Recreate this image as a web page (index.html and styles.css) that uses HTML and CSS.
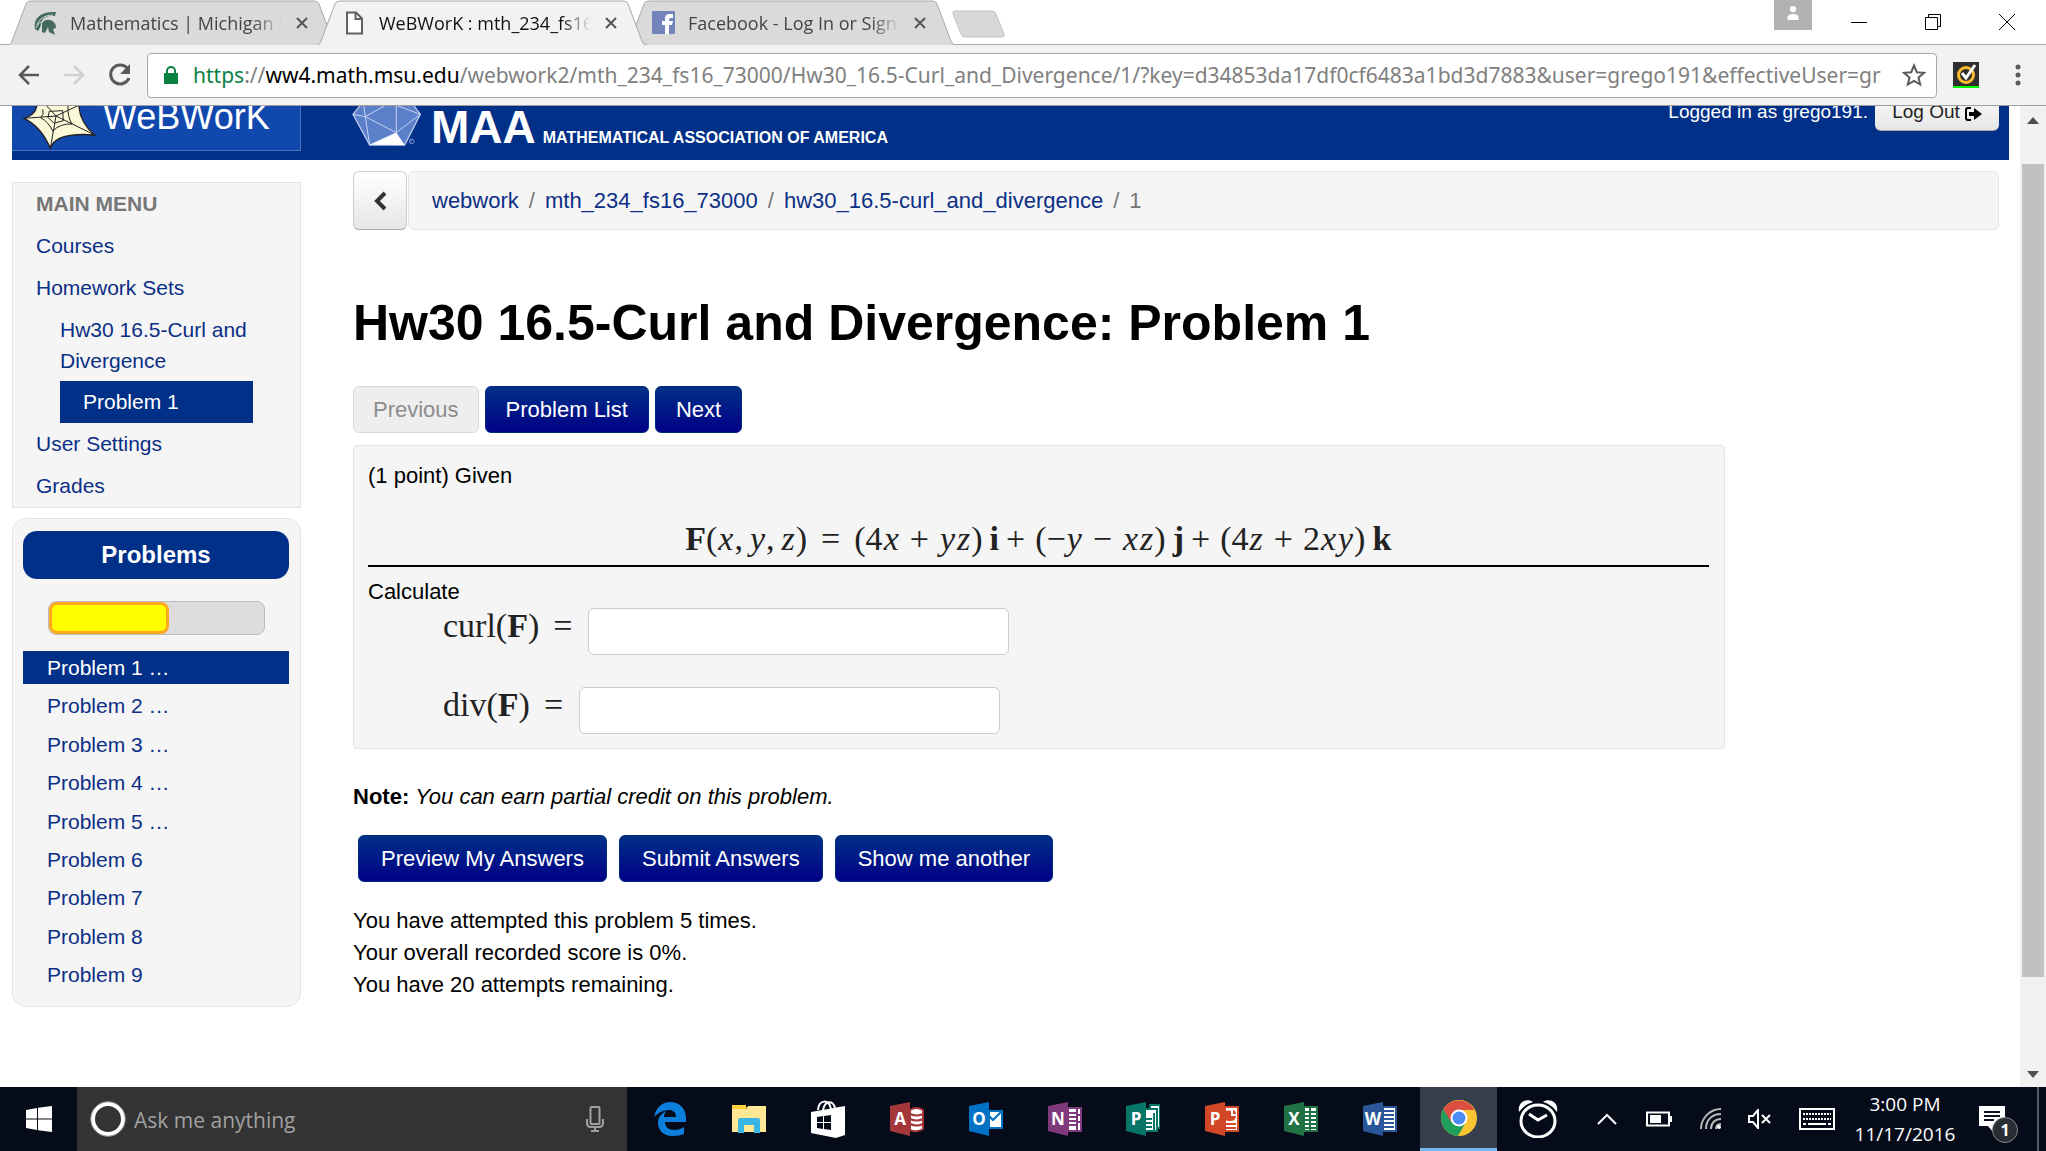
FILE: index.html
```html
<!DOCTYPE html>
<html lang="en">
<head>
<meta charset="utf-8">
<title>WeBWorK : mth_234_fs16_73000 : Hw30_16.5-Curl_and_Divergence : 1</title>
<link rel="stylesheet" href="styles.css">
</head>
<body>
<header class="tabstrip">
  <div class="tabs">
    <div class="tab">
      <svg class="tab-shape" viewBox="0 0 330 45"><path d="M0 45 C3 45 3 43 4 41 L18 4 Q19 1 23 1 H306 Q310 1 311 4 L325 41 Q326 45 330 45"/></svg>
      <svg class="favicon" viewBox="0 0 24 24"><path fill="#456a60" d="M1 18C-1 8 6 0 22 1l-1 4C14 4 8 7 7 12c0 3-1 5-3 8z"/><path fill="#456a60" d="M8 12c2-3 5-4 8-3 4 1 6 4 6 8l-3 1 2 6-6-3-1-5-3 6-3-1z"/><path d="M3 14c2-6 8-10 16-10M2 17c1-3 3-5 5-6" stroke="#dadada" fill="none"/></svg>
      <span class="tab-title">Mathematics | Michigan State</span>
      <button class="tab-close" aria-label="Close tab"><svg viewBox="0 0 12 12"><path d="M1 1 11 11M11 1 1 11"/></svg></button>
    </div>
    <div class="tab active">
      <svg class="tab-shape" viewBox="0 0 330 45"><path d="M0 45 C3 45 3 43 4 41 L18 4 Q19 1 23 1 H306 Q310 1 311 4 L325 41 Q326 45 330 45"/></svg>
      <svg class="favicon" viewBox="0 0 24 24"><path fill="#fff" stroke="#616161" stroke-width="2" d="M4 1.500h9l6 6V22.500H4zM12.500 2v6H19"/></svg>
      <span class="tab-title">WeBWorK : mth_234_fs16_73000</span>
      <button class="tab-close" aria-label="Close tab"><svg viewBox="0 0 12 12"><path d="M1 1 11 11M11 1 1 11"/></svg></button>
    </div>
    <div class="tab">
      <svg class="tab-shape" viewBox="0 0 330 45"><path d="M0 45 C3 45 3 43 4 41 L18 4 Q19 1 23 1 H306 Q310 1 311 4 L325 41 Q326 45 330 45"/></svg>
      <svg class="favicon" viewBox="0 0 24 24"><rect x="0" y="0" width="23" height="23" rx="1" fill="#7384bc"/><path fill="#fff" d="M13 23v-9h-3v-4h3V8c0-4 2-5 5-5h3v4h-2c-2 0-2 1-2 2v1h4l-1 4h-3v9z"/></svg>
      <span class="tab-title">Facebook - Log In or Sign Up</span>
      <button class="tab-close" aria-label="Close tab"><svg viewBox="0 0 12 12"><path d="M1 1 11 11M11 1 1 11"/></svg></button>
    </div>
    <button class="new-tab" aria-label="New tab"><svg viewBox="0 0 56 28"><path d="M4 1H41Q44 1 45 4L53 24Q54 27 51 27H14Q11 27 10 24L2 4Q1 1 4 1Z" fill="#d8d8d8" stroke="#c4c4c4"/></svg></button>
  </div>
  <div class="window-buttons">
    <button class="profile" aria-label="Profile"><svg width="14" height="14" viewBox="0 0 14 18"><circle cx="7" cy="4" r="4" fill="#fff"/><path fill="#fff" d="M0 18v-4c0-5 14-5 14 0v4z"/></svg></button>
    <button aria-label="Minimize"><svg width="18" height="18" viewBox="0 0 18 18"><path d="M1 9.500H17"/></svg></button>
    <button aria-label="Restore"><svg width="18" height="18" viewBox="0 0 18 18"><path d="M1.500 4.500H13.500V16.500H1.500zM4.500 4V1.500H16.500V13.500H13.500"/></svg></button>
    <button aria-label="Close"><svg width="18" height="18" viewBox="0 0 18 18"><path d="M1 1 17 17M17 1 1 17"/></svg></button>
  </div>
</header>

<nav class="toolbar" aria-label="Browser">
  <button class="tool" aria-label="Back"><svg width="22" height="20" viewBox="0 0 22 20"><path d="M21 10H2M11 1 2 10l9 9" stroke="#5a5a5a" stroke-width="2.500" fill="none"/></svg></button>
  <button class="tool" aria-label="Forward"><svg width="22" height="20" viewBox="0 0 22 20"><path d="M1 10H20M11 1l9 9-9 9" stroke="#d0d0d0" stroke-width="2.500" fill="none"/></svg></button>
  <button class="tool" aria-label="Reload"><svg width="24" height="24" viewBox="0 0 24 24"><path d="M20 6A9.500 9.500 0 1 0 21 15" stroke="#5a5a5a" stroke-width="3" fill="none"/><path d="M22 1v10H12z" fill="#5a5a5a"/></svg></button>
  <div class="omnibox">
    <svg class="lock" width="14" height="18" viewBox="0 0 14 18"><path fill="#0b8043" d="M0 7h14v11H0z"/><path d="M3 8V5a4 4 0 0 1 8 0v3" fill="none" stroke="#0b8043" stroke-width="2"/></svg>
    <div class="url" role="textbox" aria-label="Address"><span class="scheme">https</span>://<span class="host">ww4.math.msu.edu</span>/webwork2/mth_234_fs16_73000/Hw30_16.5-Curl_and_Divergence/1/?key=d34853da17df0cf6483a1bd3d7883&amp;user=grego191&amp;effectiveUser=gr</div>
    <button class="star" aria-label="Bookmark"><svg width="24" height="24" viewBox="0 0 24 24"><path d="M12 2.500l2.800 6.700 7.200.6-5.500 4.700 1.700 7L12 17.800l-6.200 3.700 1.700-7L2 9.800l7.200-.6z" fill="none" stroke="#5a5a5a" stroke-width="2"/></svg></button>
  </div>
  <button class="tool norton" aria-label="Norton"><svg width="26" height="26" viewBox="0 0 26 26"><path fill="#2e2e2e" d="M0 0h26v24H0z"/><path fill="#0f0" d="M0 24h26v2H0z"/><circle cx="13" cy="13" r="7.500" fill="none" stroke="#fdbb30" stroke-width="3"/><path d="M9 11l4 5 9-13" fill="none" stroke="#fff" stroke-width="3"/></svg></button>
  <button class="tool kebab" aria-label="Menu"><svg width="6" height="22" viewBox="0 0 6 22"><g fill="#5a5a5a"><circle cx="3" cy="3" r="2.500"/><circle cx="3" cy="11" r="2.500"/><circle cx="3" cy="19" r="2.500"/></g></svg></button>
</nav>

<div class="viewport">
  <div class="page">
    <div class="masthead">
      <a class="brand" href="#"><svg width="88" height="45" viewBox="0 30 264 135"><path d="M75 28Q70 58 36 67Q88 92 115 157Q130 108 248 117Q205 82 200 28z" fill="#fbf9d8" stroke="#222" stroke-width="4"/><path d="M36 67 132 60 115 157M132 60 248 117M132 60 200 28M132 60 95 20M92 40Q98 55 86 65Q110 78 122 105Q145 82 180 84Q166 62 168 30M112 46l-4 18 18 18 28-8 -2-30z" fill="none" stroke="#222" stroke-width="3"/></svg><span>WeBWorK</span></a>
      <a class="maa" href="#"><svg width="72" height="45" viewBox="1020 30 216 135"><path d="M1045 28 1023 55 1073 147H1178L1225 55 1205 28z" fill="#5c7fca" stroke="#b9caee" stroke-width="4"/><path d="M1023 55 1060 62 1073 147 1153 110 1225 55M1060 62 1153 110V28M1060 62 1120 28M1060 62l-5-34M1153 28l72 27" fill="none" stroke="#c5d3f2" stroke-width="3"/><path d="M1075 146 1153 110 1178 147z" fill="#fff"/><circle cx="1199" cy="136" r="7" fill="none" stroke="#7f9bd8" stroke-width="3"/><path d="M1197 140v-8h4" stroke="#7f9bd8" stroke-width="2" fill="none"/></svg><span class="maa-short">MAA</span><span class="maa-long">MATHEMATICAL ASSOCIATION OF AMERICA</span></a>
      <div class="login">
        <span>Logged in as grego191.</span>
        <button class="logout">Log Out <svg width="17" height="16" viewBox="0 0 17 16"><path d="M6 2H3Q1 2 1 4v8q0 2 2 2h3" fill="none" stroke="#000" stroke-width="2"/><path d="M4 6h5V2l8 6-8 6v-4H4z"/></svg></button>
      </div>
    </div>

    <div class="columns">
      <aside class="sidebar">
        <nav class="menu">
          <h2>MAIN MENU</h2>
          <ul>
            <li><a href="#">Courses</a></li>
            <li><a href="#">Homework Sets</a>
              <ul class="submenu">
                <li><a href="#">Hw30 16.5-Curl and Divergence</a></li>
                <li><a class="current" href="#">Problem 1</a></li>
              </ul>
            </li>
            <li><a href="#">User Settings</a></li>
            <li><a href="#">Grades</a></li>
          </ul>
        </nav>
        <nav class="problems">
          <h2>Problems</h2>
          <div class="progress"><div class="bar" style="width:56%"></div></div>
          <ul>
            <li><a class="current" href="#">Problem 1 …</a></li>
            <li><a href="#">Problem 2 …</a></li>
            <li><a href="#">Problem 3 …</a></li>
            <li><a href="#">Problem 4 …</a></li>
            <li><a href="#">Problem 5 …</a></li>
            <li><a href="#">Problem 6</a></li>
            <li><a href="#">Problem 7</a></li>
            <li><a href="#">Problem 8</a></li>
            <li><a href="#">Problem 9</a></li>
          </ul>
        </nav>
      </aside>

      <main class="content">
        <div class="crumb-row">
          <button class="up" aria-label="Up"><svg width="14" height="20" viewBox="0 0 14 20"><path d="M12 2 4 10l8 8" fill="none" stroke="#333" stroke-width="4"/></svg></button>
          <nav class="crumbs"><a href="#">webwork</a><i>/</i><a href="#">mth_234_fs16_73000</a><i>/</i><a href="#">hw30_16.5-curl_and_divergence</a><i>/</i><span>1</span></nav>
        </div>
        <h1>Hw30 16.5-Curl and Divergence: Problem 1</h1>
        <div class="pager">
          <button class="btn" disabled>Previous</button>
          <button class="btn primary">Problem List</button>
          <button class="btn primary">Next</button>
        </div>
        <form class="answers">
          <section class="problem">
            <p>(1 point) Given</p>
            <p class="math display"><b>F</b>(<i>x</i>,<i class="arg">y</i>,<i class="arg">z</i>)<span class="rel">=</span>(4<i>x</i><span class="op">+</span><i>y</i><i>z</i>)<b class="vec">i</b><span class="op tight">+</span>(−<i>y</i><span class="op">−</span><i>x</i><i>z</i>)<b class="vec">j</b><span class="op tight">+</span>(4<i>z</i><span class="op">+</span>2<i>x</i><i>y</i>)<b class="vec">k</b></p>
            <hr>
            <p>Calculate</p>
            <div class="field"><label class="math" for="curl">curl(<b>F</b>)<span class="rel">=</span></label><input id="curl" type="text"></div>
            <div class="field"><label class="math" for="div">div(<b>F</b>)<span class="rel">=</span></label><input id="div" type="text"></div>
          </section>
          <p class="note"><b>Note:</b> <em>You can earn partial credit on this problem.</em></p>
          <div class="submit">
            <button type="button" class="btn primary">Preview My Answers</button>
            <button type="button" class="btn primary">Submit Answers</button>
            <button type="button" class="btn primary">Show me another</button>
          </div>
        </form>
        <p class="attempts">You have attempted this problem 5 times.<br>Your overall recorded score is 0%.<br>You have 20 attempts remaining.</p>
      </main>
    </div>
  </div>
  <div class="scrollbar" aria-hidden="true">
    <svg width="12" height="7" viewBox="0 0 12 7"><path fill="#505050" d="M6 0l6 7H0z"/></svg>
    <div class="track"><div class="thumb"></div></div>
    <svg width="12" height="7" viewBox="0 0 12 7"><path fill="#505050" d="M0 0h12L6 7z"/></svg>
  </div>
</div>

<footer class="taskbar">
  <button class="start" aria-label="Start"><svg width="26" height="26" viewBox="0 0 26 26"><path fill="#fff" d="M0 4l11-2v10.500H0zM12 1.800 26 0v12.500H12zM0 13.500h11V24L0 22zM12 13.500h14V26l-14-1.800z"/></svg></button>
  <div class="cortana">
    <svg width="36" height="36" viewBox="0 0 36 36"><circle cx="18" cy="18" r="15" fill="none" stroke="#fff" stroke-width="4"/><circle cx="18" cy="18" r="17.300" fill="none" stroke="#999"/></svg>
    <input type="text" placeholder="Ask me anything" aria-label="Ask me anything">
    <svg width="18" height="26" viewBox="0 0 18 26"><g fill="none" stroke="#a0a0a0" stroke-width="2"><rect x="4.500" y="1" width="9" height="17" rx="1"/><path d="M1 13v4q0 4 4 4h8q4 0 4-4v-4M9 21v4M5 25h8"/></g></svg>
  </div>
  <div class="apps">
    <button aria-label="Edge"><svg width="34" height="34" viewBox="0 0 34 34"><path fill="#0a7fdb" d="M1 15C3 5 10 0 17 0c10 0 16 7 16 16v4H12c0 5 4 8 9 8 4 0 7-1 10-3v7c-3 1-7 2-11 2C10 34 5 28 5 21c0-6 4-10 8-12-1 2-2 3-2 6h12c0-5-3-7-7-7-6 0-11 3-15 7z"/></svg></button>
    <button aria-label="File Explorer"><svg width="34" height="34" viewBox="0 0 34 34"><path fill="#ffd03c" d="M0 3h13l2 3H0z"/><path fill="#ffe793" d="M0 7h14l2-3h18v26H0z"/><path fill="#ffd03c" d="M0 3h14v4H0z"/><path fill="#39b5e6" d="M6 31V18q0-2 2-2h18q2 0 2 2v13h-6v-8H12v8z"/></svg></button>
    <button aria-label="Store"><svg width="34" height="38" viewBox="0 0 34 38"><path fill="none" stroke="#fff" stroke-width="2" d="M7 10C8-1 18-1 20 9M12 10C14 0 22 0 24 8"/><path fill="#fff" d="M0 12 34 6v29l-9 3L0 33z"/><path fill="#050b18" d="M6 17l6-1v6H6zM13 16l7-1v7h-7zM6 23h6v6l-6-1zM13 23h7v7l-7-1z"/></svg></button>
    <button aria-label="Access"><svg class="office" viewBox="0 0 34 34"><path fill="#a4373a" d="M0 4 20 0v34L0 29z"/><path fill="#fff" stroke="#a4373a" stroke-width="2" d="M20 8q6-4 13 0v19q-6 4-13 1z"/><path stroke="#a4373a" stroke-width="2" fill="none" d="M20 12q7 3 13 0M20 17q7 3 13 0M20 22q7 3 13 0"/><text x="10" y="23">A</text></svg></button>
    <button aria-label="Outlook"><svg class="office" viewBox="0 0 34 34"><path fill="#0072c6" d="M0 4 20 0v34L0 29z"/><path fill="#fff" stroke="#0072c6" stroke-width="2" d="M20 9h13v17H20z"/><path stroke="#0072c6" stroke-width="2" fill="none" d="M20 14l4 4 9-9"/><text x="10" y="23">O</text></svg></button>
    <button aria-label="OneNote"><svg class="office" viewBox="0 0 34 34"><path fill="#80397b" d="M0 4 20 0v34L0 29z"/><path fill="#fff" stroke="#80397b" stroke-width="2" d="M20 6h13v23H20z"/><path stroke="#80397b" stroke-width="2" d="M20 11h8M20 15h8M20 19h8M20 23h8M29 6v23M29 13h5M29 20h5"/><text x="10" y="23">N</text></svg></button>
    <button aria-label="Publisher"><svg class="office" viewBox="0 0 34 34"><path fill="#fff" stroke="#077568" stroke-width="2" d="M24 3h10v23H24z"/><path fill="#077568" d="M0 4 20 0v34L0 29z"/><path fill="#fff" stroke="#077568" stroke-width="2" d="M19 7h12v22H19z"/><path stroke="#077568" stroke-width="2" d="M20 17h6M20 21h6M20 25h6M28 11v18"/><text x="10" y="23">P</text></svg></button>
    <button aria-label="PowerPoint"><svg class="office" viewBox="0 0 34 34"><path fill="#d24726" d="M0 4 20 0v34L0 29z"/><path fill="#fff" stroke="#d24726" stroke-width="2" d="M20 5h13v24H20z"/><path stroke="#d24726" stroke-width="2" fill="none" d="M20 22h11M20 26h11"/><path fill="#d24726" d="M20 9q5-1 6 0v5h5q0 5-6 5-4 0-5-2z"/><path fill="#d24726" d="M28 8q3 1 3 4h-3z"/><text x="10" y="23">P</text></svg></button>
    <button aria-label="Excel"><svg class="office" viewBox="0 0 34 34"><path fill="#207245" d="M0 4 20 0v34L0 29z"/><path fill="#fff" stroke="#207245" stroke-width="2" d="M20 5h13v24H20z"/><path stroke="#207245" stroke-width="2" d="M20 10h13M20 14h13M20 18h13M20 22h13M20 26h13M26 5v24"/><text x="10" y="23">X</text></svg></button>
    <button aria-label="Word"><svg class="office" viewBox="0 0 34 34"><path fill="#2a579a" d="M0 4 20 0v34L0 29z"/><path fill="#fff" stroke="#2a579a" stroke-width="2" d="M20 5h13v24H20z"/><path stroke="#2a579a" stroke-width="2" d="M20 9h11M20 13h11M20 17h11M20 21h11M20 25h11"/><text x="10" y="23">W</text></svg></button>
    <button class="running" aria-label="Chrome"><svg width="36" height="36" viewBox="0 0 36 36"><circle cx="18" cy="18" r="18" fill="#fbc531"/><path fill="#dc4e41" d="M18 18 2.400 9A18 18 0 0 1 33.600 10H18z"/><path fill="#1fa15d" d="M2.400 9A18 18 0 0 0 17 36l8-14-14 0z"/><path fill="#dc4e41" d="M2.400 9 10 22l8-12z"/><circle cx="18" cy="18" r="8.500" fill="#fff"/><circle cx="18" cy="18" r="6.500" fill="#4c8bf5"/></svg></button>
    <button aria-label="Alarms"><svg width="40" height="38" viewBox="0 0 40 38"><g fill="none" stroke="#fff" stroke-width="3"><ellipse cx="20" cy="21" rx="17" ry="16"/><path d="M11 14l9 6 9-5"/></g><path fill="#fff" d="M1 12C-1 1 10-2 15 2 8 4 4 8 1 12zM39 12C41 1 30-2 25 2 32 4 36 8 39 12z"/></svg></button>
  </div>
  <div class="tray">
    <button aria-label="Show hidden icons"><svg width="20" height="12" viewBox="0 0 20 12"><path d="M1 11 10 2l9 9"/></svg></button>
    <button aria-label="Battery"><svg width="26" height="16" viewBox="0 0 26 16"><path d="M1 1.500h22v13H1zM25 5v6"/><path fill="#fff" stroke="none" d="M4 4h11v8H4z"/></svg></button>
    <button aria-label="Network"><svg width="22" height="22" viewBox="0 0 22 22"><path d="M1 21C1 10 10 1 21 1M6 21C6 12 12 6 21 6M11 21c0-6 4-10 10-10M16 21q0-5 5-5" stroke="#bbb"/><circle cx="19" cy="19" r="2" fill="#fff" stroke="none"/></svg></button>
    <button class="volume" aria-label="Volume muted"><svg width="24" height="20" viewBox="0 0 24 20"><path d="M1 7h4l5-6v18l-5-6H1zM14 6l8 8M22 6l-8 8"/></svg></button>
    <button class="keyboard" aria-label="Touch keyboard"><svg width="36" height="22" viewBox="0 0 36 22"><path d="M1 1h34v20H1z"/><path stroke-dasharray="2 1" d="M4 6h28M4 11h28"/><path d="M4 16h3M9 16h18M29 16h3"/></svg></button>
    <div class="clock"><span>3:00 PM</span><span>11/17/2016</span></div>
    <button class="notify" aria-label="1 new notification"><svg width="28" height="26" viewBox="0 0 28 26"><path fill="#fff" stroke="none" d="M0 0h26v20H14v6l-5-6H0z"/><path stroke="#0b1220" d="M5 6h16M5 10h16M5 14h10"/></svg><span class="badge">1</span></button>
    <div class="desktop-edge"></div>
  </div>
</footer>
</body>
</html>
```
FILE: styles.css
```css
* { box-sizing: border-box; }
body {
  margin: 0;
  min-height: 100vh;
  display: flex;
  flex-direction: column;
  background: #fff;
  color: #000;
  font: 22px/32px "Liberation Sans", Arial, sans-serif;
}
button { font: inherit; border: 0; padding: 0; background: none; color: inherit; }
svg { display: block; flex: none; }
p, h1, h2, ul { margin: 0; padding: 0; }
ul { list-style: none; }
a { color: #0b2f85; text-decoration: none; }

/* browser frame */
.tabstrip {
  display: flex;
  justify-content: space-between;
  height: 45px;
  border-bottom: 1px solid #a8a8a8;
  font: 18px/24px "Open Sans", "Noto Sans", sans-serif;
}
.tabs { display: flex; padding-left: 8px; }
.tab {
  position: relative;
  display: flex;
  align-items: center;
  width: 330px;
  height: 45px;
  padding: 1px 14px 0 26px;
  margin-right: -21px;
  color: #444;
}
.tab.active { z-index: 1; color: #111; }
.tab-shape { position: absolute; left: 0; top: 0; width: 330px; height: 45px; }
.tab-shape path { fill: #dadada; stroke: #a8a8a8; }
.tab.active .tab-shape path { fill: #f2f2f2; }
.favicon { position: relative; width: 24px; height: 24px; }
.tab-title {
  position: relative;
  width: 212px;
  margin-left: 12px;
  overflow: hidden;
  white-space: nowrap;
  -webkit-mask-image: linear-gradient(90deg, #000 86%, transparent);
  mask-image: linear-gradient(90deg, #000 86%, transparent);
}
.tab-close { position: relative; margin-left: 14px; }
.tab-close svg { width: 12px; height: 12px; stroke: #555; stroke-width: 2; }
.new-tab { align-self: center; margin-left: 16px; padding-top: 3px; }
.new-tab svg { width: 56px; height: 28px; }
.window-buttons { display: flex; align-items: center; padding-right: 2px; }
.window-buttons button { width: 74px; display: flex; justify-content: center; }
.window-buttons svg { fill: none; stroke: #000; stroke-width: 1; }
.window-buttons .profile {
  width: 38px;
  height: 30px;
  padding-bottom: 4px;
  margin-right: 10px;
  align-self: flex-start;
  align-items: center;
  background: #b2b2b2;
}
.window-buttons .profile svg { stroke: none; }

.toolbar {
  display: flex;
  align-items: center;
  height: 61px;
  padding: 0 15px 0 18px;
  background: #f2f2f2;
  border-bottom: 1px solid #a0a0a0;
}
.tool { display: flex; align-items: center; margin-right: 23px; }
.omnibox {
  display: flex;
  align-items: center;
  flex: 1;
  min-width: 0;
  height: 45px;
  margin-left: -8px;
  padding: 0 10px 0 16px;
  background: #fff;
  border: 1px solid #a8a8a8;
  border-radius: 4px;
}
.url {
  flex: 1;
  min-width: 0;
  margin-left: 15px;
  overflow: hidden;
  white-space: nowrap;
  color: #808080;
  font: 21px/32px "Noto Sans", "Open Sans", sans-serif;
}
.scheme { color: #0b8043; }
.host { color: #000; }
.norton { margin: 0 36px 0 16px; }
.kebab { margin: 0 10px 0 0; }

/* page area */
.viewport { flex: 1; display: flex; }
.page { flex: 1; min-width: 0; padding: 0 11px 0 12px; }
.masthead {
  display: flex;
  height: 54px;
  padding-right: 10px;
  background: #003087;
  color: #fff;
  overflow: hidden;
}
.masthead a { color: #fff; }
.brand {
  display: flex;
  width: 289px;
  height: 45px;
  margin-right: 51px;
  background: #1148ae;
  border: solid #4a72be;
  border-width: 0 1px 1px 0;
  font-size: 36px;
  line-height: 22px;
}
.brand span { margin-left: 3px; }
.maa {
  display: flex;
  height: 45px;
  font-weight: bold;
}
.maa-short { margin-left: 7px; font-size: 46px; line-height: 42px; }
.maa-long { margin-left: 7px; font-size: 16px; line-height: 63px; }
.login { display: flex; gap: 7px; margin-left: auto; font-size: 19px; line-height: 12px; }
.logout {
  display: flex;
  gap: 5px;
  width: 124px;
  height: 25px;
  justify-content: center;
  align-items: flex-start;
  border-bottom: 1px solid #aaa;
  border-radius: 0 0 6px 6px;
  background: linear-gradient(#f4f4f4, #e6e6e6);
  color: #222;
}

.columns { display: flex; gap: 52px; padding-right: 10px; }
.sidebar { width: 289px; flex: none; padding-top: 22px; font-size: 21px; }
.menu { background: #f5f5f5; border: 1px solid #e3e3e3; }
.menu h2 { padding: 5px 23px; font-size: 21px; line-height: 32px; color: #777; }
.menu a { display: block; padding: 5px 23px; }
.submenu { padding: 0 47px 0 47px; }
.submenu a { padding: 5px 0; line-height: 31px; }
.submenu a.current { padding: 5px 23px; line-height: 32px; }
a.current { background: #003087; color: #fff; }
.problems {
  margin-top: 10px;
  padding: 12px 11px 15px 10px;
  background: #f5f5f5;
  border: 1px solid #e3e3e3;
  border-radius: 14px;
}
.problems h2 {
  border-radius: 14px;
  background: #003087;
  color: #fff;
  font-size: 24px;
  line-height: 48px;
  text-align: center;
}
.progress {
  height: 34px;
  margin: 22px 24px 16px 25px;
  border: 1px solid #bbb;
  border-radius: 8px;
  background: #ddd;
}
.bar { height: 32px; border: 3px solid #ffa81f; border-radius: 8px; background: #ff0; }
.problems ul { display: flex; flex-direction: column; justify-content: space-between; min-height: 340px; }
.problems li a { display: block; padding-left: 24px; line-height: 33px; }

.content { flex: 1; min-width: 0; padding-top: 11px; }
.crumb-row { display: flex; gap: 1px; height: 59px; }
.up {
  display: flex;
  align-items: center;
  justify-content: center;
  width: 54px;
  border: 1px solid #ccc;
  border-bottom-color: #aaa;
  border-radius: 6px;
  background: linear-gradient(#fff, #e6e6e6);
}
.crumbs {
  display: flex;
  align-items: center;
  gap: 10px;
  flex: 1;
  padding-left: 23px;
  background: #f5f5f5;
  border: 1px solid #e5e5e5;
  border-radius: 6px;
  color: #777;
}
.crumbs i { font-style: normal; }
h1 { margin-top: 63px; font-size: 50px; line-height: 60px; }
.pager { display: flex; gap: 6px; margin-top: 33px; }
.btn {
  height: 47px;
  padding: 0 19px;
  border: 1px solid #d8d8d8;
  border-radius: 6px;
  background: #eee;
  color: #8c8c8c;
}
.btn.primary {
  padding: 0 20px;
  border-color: #002a80;
  background: linear-gradient(#003087, #000087);
  color: #fff;
}
.problem {
  width: 83.33%;
  margin-top: 12px;
  padding: 14px 15px 14px 14px;
  background: #f5f5f5;
  border: 1px solid #e3e3e3;
  border-radius: 4px;
}
.math { font: 34px/36px "Liberation Serif", "Times New Roman", serif; color: #222; }
.display { margin-top: 29px; text-align: center; }
.display i { margin: 0 1px; }
.display .arg { margin-left: 7px; }
.rel { margin: 0 14px; }
.op { margin: 0 10px; }
.op.tight { margin-left: 7px; }
.vec { margin-left: 7px; }
.problem hr { margin: 8px 0 9px; border: 0; border-top: 2px solid #000; }
.field { display: flex; padding-left: 75px; height: 47px; }
.field + .field { margin-top: 32px; }
.field .rel { margin-right: 16px; }
.field input {
  width: 421px;
  border: 1px solid #ccc;
  border-radius: 6px;
  background: #fff;
  font: inherit;
}
.note { margin-top: 32px; }
.submit { display: flex; gap: 12px; margin: 22px 5px 0; }
.submit .btn { padding: 0 22px; }
.attempts { margin-top: 23px; }

.scrollbar {
  display: flex;
  flex-direction: column;
  align-items: center;
  width: 26px;
  padding: 11px 0 9px;
  background: #f1f1f1;
}
.track { flex: 1; width: 22px; padding: 40px 0 94px; }
.thumb { height: 100%; background: #c1c1c1; }

/* taskbar */
.taskbar {
  display: flex;
  height: 64px;
  background: #050b18;
  color: #fff;
  font: 19px/30px "Open Sans", "Noto Sans", sans-serif;
}
.taskbar button { display: flex; align-items: center; justify-content: center; }
.start { width: 77px; }
.cortana {
  display: flex;
  align-items: center;
  width: 550px;
  padding: 0 23px 0 13px;
  background: #333;
}
.cortana input {
  flex: 1;
  min-width: 0;
  padding: 2px 8px 0;
  border: 0;
  background: none;
  font: 21px/30px "Open Sans", "Noto Sans", sans-serif;
}
.cortana input::placeholder { color: #a0a0a0; opacity: 1; }
.apps {
  display: grid;
  grid-template-columns: repeat(12, 1fr);
  gap: 2px;
  width: 944px;
  margin-left: 5px;
}
.office { width: 34px; height: 34px; }
.office text { fill: #fff; font: bold 17px "Open Sans", sans-serif; text-anchor: middle; }
.running { background: #383f4c; border-bottom: 3px solid #76b9ed; }
.tray { display: flex; margin-left: auto; }
.tray button { width: 52px; }
.tray svg { fill: none; stroke: #fff; stroke-width: 2; }
.tray .volume { width: 46px; }
.tray .keyboard { width: 68px; }
.clock { display: flex; flex-direction: column; align-items: center; width: 108px; padding-top: 2px; }
.tray .notify { position: relative; width: 78px; padding-right: 10px; }
.badge {
  position: absolute;
  left: 33px;
  top: 30px;
  width: 26px;
  height: 26px;
  border: 1px solid #888;
  border-radius: 50%;
  background: #2a2d33;
  font: bold 16px/24px "Open Sans", sans-serif;
  text-align: center;
}
.desktop-edge { width: 9px; border-left: 2px solid #555b66; }
```
